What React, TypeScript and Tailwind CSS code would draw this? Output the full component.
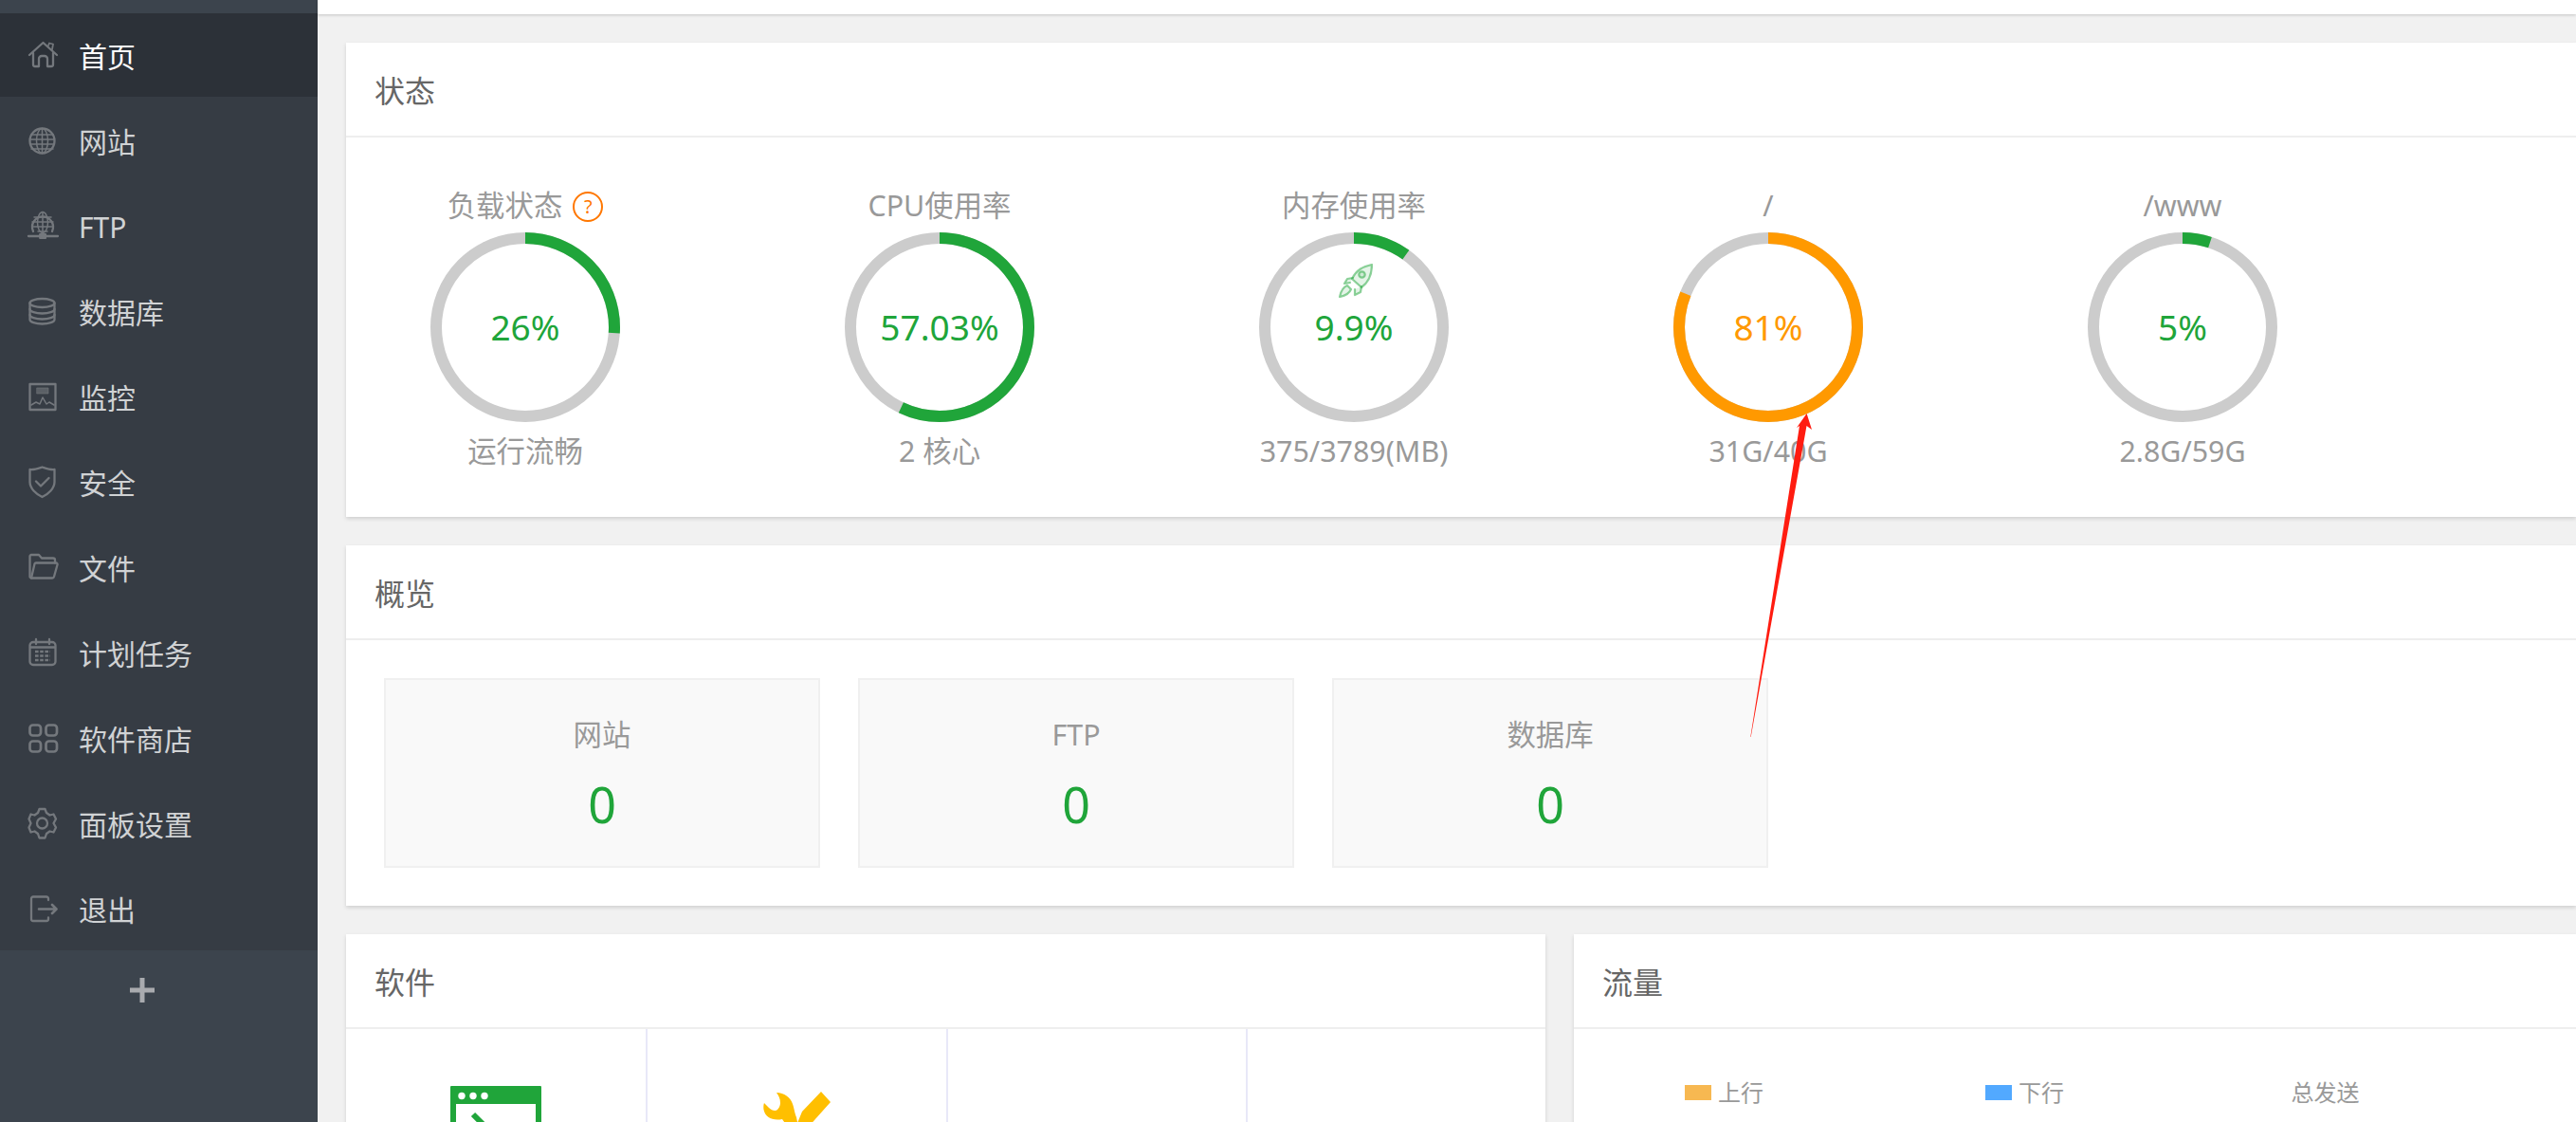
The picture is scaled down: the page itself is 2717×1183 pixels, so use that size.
import React from "react";

const S = ({ children }: { children: React.ReactNode }) => (
  <svg className="overflow-visible blur-[0.4px]" width={32} height={30} viewBox="0 0 32 30" fill="none" stroke="#74787d" strokeWidth={2.3} strokeLinecap="round" strokeLinejoin="round">
    {children}
  </svg>
);

const HomeIcon = () => (
  <S>
    <path d="M1 15 L15.5 2 L30 15" />
    <path d="M21 5 L22 2.5 L26 3.5 L25 9" strokeWidth={1.8} />
    <path d="M5 13 V25 a2 2 0 0 0 2 2 H11 V19 a3 3 0 0 1 3 -3 H17 a3 3 0 0 1 3 3 V27 H24 a2 2 0 0 0 2 -2 V13" />
  </S>
);
const GlobeIcon = () => (
  <S>
    <circle cx="14.5" cy="14.5" r="13" />
    <ellipse cx="14.5" cy="14.5" rx="6" ry="13" strokeWidth={1.5} />
    <path d="M14.5 1.5 V27.5 M3 8 H26 M1.5 13 H27.5 M1.5 18 H27.5 M3 23 H26" strokeWidth={1.5} />
  </S>
);
const FtpIcon = () => (
  <S>
    <path d="M5 20 A11 11 0 1 1 25 20" />
    <ellipse cx="15" cy="10.5" rx="5.5" ry="11" strokeWidth={1.5} />
    <path d="M15 0 V22 M6 5 H24 M4 10 H26 M5 15 H25" strokeWidth={1.5} />
    <path d="M10 20 H20" strokeWidth={1.5} />
    <path d="M0 25 H31" />
    <rect x="12" y="22.5" width="6.5" height="5" fill="#74787d" strokeWidth={1} />
  </S>
);
const DbIcon = () => (
  <S>
    <ellipse cx="14.5" cy="5.5" rx="13" ry="4.5" />
    <path d="M1.5 5.5 V23 C1.5 25.5 7.5 27.5 14.5 27.5 S27.5 25.5 27.5 23 V5.5" />
    <path d="M1.5 12 C1.5 14.5 7.5 16.5 14.5 16.5 S27.5 14.5 27.5 12" />
    <path d="M1.5 18 C1.5 20.5 7.5 22.5 14.5 22.5 S27.5 20.5 27.5 18" />
  </S>
);
const MonitorIcon = () => (
  <S>
    <rect x="1.5" y="1" width="27" height="27" />
    <rect x="9" y="5" width="12" height="6" fill="#74787d" strokeWidth={1} strokeOpacity={0.6} fillOpacity={0.6} />
    <path d="M3 23 L8 20 L12 22 L15 15 L19 22 L22 20 L27 23" strokeWidth={1.5} />
  </S>
);
const ShieldIcon = () => (
  <S>
    <path d="M1.5 1 C6 1.5 10 0 14.5 -1.5 C19 0 23 1.5 27.5 1 V14 C27.5 21 21 27 14.5 30 C8 27 1.5 21 1.5 14 Z" />
    <path d="M8 13.5 L13 18.5 L21.5 10" />
  </S>
);
const FolderIcon = () => (
  <S>
    <g transform="translate(0 -1.5)">
      <path d="M3 27 a1.5 1.5 0 0 1 -1.5 -1.5 V4 a1.5 1.5 0 0 1 1.5 -1.5 H11 L14 6 H26 a2 2 0 0 1 2 2 V11" />
      <path d="M3 27 L6.5 12 a1.5 1.5 0 0 1 1.5 -1 H29 a1.5 1.5 0 0 1 1.5 2 L27 25.5 a2 2 0 0 1 -2 1.5 Z" />
    </g>
  </S>
);
const CalIcon = () => (
  <S>
    <g transform="translate(0 -1)">
      <rect x="1.5" y="4" width="27" height="24" rx="3.5" />
      <path d="M8 1 V6 M22 1 V6 M2 9.5 H28" />
      <path d="M7 14 H23 M7 18.5 H23 M7 23 H23" strokeWidth={2.6} strokeDasharray="3.6 1.6" strokeLinecap="butt" />
    </g>
  </S>
);
const AppsIcon = () => (
  <S>
    <rect x="1.5" y="0.5" width="11.5" height="11" rx="3.2" strokeWidth={2.7} />
    <rect x="18.5" y="0.5" width="11.5" height="11" rx="3.2" strokeWidth={2.7} />
    <rect x="1.5" y="17.5" width="11.5" height="11" rx="3.2" strokeWidth={2.7} />
    <rect x="18.5" y="17.5" width="11.5" height="11" rx="3.2" strokeWidth={2.7} />
  </S>
);
const GearIcon = () => (
  <S>
    <path d="M11.5 -1 H17.5 L19 3 L22.5 5.5 L26.5 4.5 L29 9.5 L26.5 14 L29 18.5 L26.5 23.5 L22.5 22.5 L19 25 L17.5 29.5 H11.5 L10 25 L6.5 22.5 L2.5 23.5 L0.5 18.5 L2.5 14 L0.5 9.5 L2.5 4.5 L6.5 5.5 L10 3 Z" />
    <circle cx="14.5" cy="14" r="5.5" />
  </S>
);
const LogoutIcon = () => (
  <S>
    <path d="M21 5 V3.5 a2 2 0 0 0 -2 -2 H5 a2 2 0 0 0 -2 2 V25 a2 2 0 0 0 2 2 H19 a2 2 0 0 0 2 -2 V23.5" />
    <path d="M11 14.5 H29 M25 10 L29.5 14.5 L25 19" strokeWidth={2.6} />
  </S>
);

const nav: { label: string; icon: React.ReactNode }[] = [
  { label: "网站", icon: <GlobeIcon /> },
  { label: "FTP", icon: <FtpIcon /> },
  { label: "数据库", icon: <DbIcon /> },
  { label: "监控", icon: <MonitorIcon /> },
  { label: "安全", icon: <ShieldIcon /> },
  { label: "文件", icon: <FolderIcon /> },
  { label: "计划任务", icon: <CalIcon /> },
  { label: "软件商店", icon: <AppsIcon /> },
  { label: "面板设置", icon: <GearIcon /> },
];

const Sidebar = () => (
  <aside className="w-[335px] shrink-0 h-full bg-[#3c444d] flex flex-col">
    <div className="h-[14px] shrink-0" />
    <nav className="bg-[#363c44] flex flex-col">
      <a className="h-[88px] mb-[2px] pt-[2px] flex items-center pl-[30px] text-[30px] bg-[#2c3138] text-white">
        <span className="w-[53px] flex mt-[-3px]">
          <HomeIcon />
        </span>
        <span>首页</span>
      </a>
      {nav.map((n) => (
        <a key={n.label} className="h-[90px] flex items-center pl-[30px] text-[30px] text-[#d0d2d4]">
          <span className="w-[53px] flex">{n.icon}</span>
          <span>{n.label}</span>
        </a>
      ))}
      <a className="h-[88px] pt-[2px] flex items-center pl-[30px] text-[30px] text-[#d0d2d4]">
        <span className="w-[53px] flex">
          <LogoutIcon />
        </span>
        <span>退出</span>
      </a>
    </nav>
    <div className="pl-[137px] pt-[29px]">
      <svg width="26" height="26" viewBox="0 0 26 26" fill="#a9abaf">
        <rect x="0" y="10.5" width="26" height="5" />
        <rect x="10.5" y="0" width="5" height="26" />
      </svg>
    </div>
  </aside>
);

const Ring = ({
  title,
  help,
  pct,
  text,
  sub,
  color = "#20a53a",
  rocket,
}: {
  title: string;
  help?: boolean;
  pct: number;
  text: string;
  sub: string;
  color?: string;
  rocket?: boolean;
}) => {
  const r = 94;
  const c = 2 * Math.PI * r;
  return (
    <div className="w-[378px] flex flex-col items-center">
      <div className="h-[34px] leading-[34px] mt-[1px] text-[30.4px] text-[#999] flex items-center gap-[11px]">
        <span>{title}</span>
        {help && (
          <span className="w-[32px] h-[32px] rounded-full border-2 border-[#f70] text-[#f70] text-[20px] flex items-center justify-center mt-[1px]">
            ?
          </span>
        )}
      </div>
      <div className="relative w-[200px] h-[200px] mt-[11px] flex items-center justify-center">
        <svg className="absolute inset-0" width="200" height="200" viewBox="0 0 200 200">
          <circle cx="100" cy="100" r={r} fill="none" stroke="#ccc" strokeWidth="12" />
          <circle
            cx="100"
            cy="100"
            r={r}
            fill="none"
            stroke={color}
            strokeWidth="12"
            strokeDasharray={`${(pct / 100) * c} ${c}`}
            transform="rotate(-90 100 100)"
          />
        </svg>
        {rocket && (
          <svg className="absolute left-[84px] top-[33px] blur-[0.4px]" width="36" height="36" viewBox="0 0 36 36" fill="#20a53a" fillOpacity={0.12} stroke="#20a53a" strokeOpacity={0.5} strokeWidth="2.2" strokeLinejoin="round" strokeLinecap="round">
            <path d="M35 1 C35 12 31 20 24 25 L14 16 C19 6 26 3 35 1 Z" />
            <circle cx="24.5" cy="11.5" r="3.2" />
            <path d="M15 15 L9 16 L6 21 L12 20" />
            <path d="M24 24 L23 30 L17 33 L17 27" />
            <path d="M9 23 C4 25 2 30 1 35 C6 34 11 32 13 27 Z" />
          </svg>
        )}
        <span className="text-[37px] leading-none relative mt-[-2px]" style={{ color }}>
          {text}
        </span>
      </div>
      <div className="h-[34px] leading-[34px] text-[30.4px] text-[#999] mt-[14px]">{sub}</div>
    </div>
  );
};

const CardHeader = ({ title }: { title: string }) => (
  <div className="h-[100px] border-b-2 border-[#eee] pl-[30px] pt-[4px] flex items-center text-[32px] text-[#666]">{title}</div>
);

const Block = ({ label }: { label: string }) => (
  <div className="w-[460px] h-[200px] bg-[#f9f9f9] border-2 border-[#f0f0f0] flex flex-col items-center">
    <div className="h-[40px] leading-[40px] mt-[38px] text-[30.4px] text-[#999]">{label}</div>
    <div className="h-[60px] leading-[60px] mt-[23px] text-[52px] text-[#20a53a]">0</div>
  </div>
);

const cardClass = "bg-white shadow-[0_2px_4px_rgba(0,0,0,0.14)]";

export default function App() {
  return (
    <div className="relative w-[2717px] h-[1183px] overflow-hidden flex bg-[#f1f1f1] font-['Noto_Sans','Noto_Sans_CJK_SC',sans-serif]">
      <Sidebar />
      <main className="flex-1 min-w-0 flex flex-col">
        <div className="h-[15px] shrink-0 bg-white shadow-[0_1px_3px_rgba(0,0,0,0.18)]" />
        <div className="pl-[30px] pt-[30px] flex flex-col gap-[30px]">
          <section className={cardClass}>
            <CardHeader title="状态" />
            <div className="flex gap-[59px] pt-[54px] pb-[52px]">
              <Ring title="负载状态" help pct={26} text="26%" sub="运行流畅" />
              <Ring title="CPU使用率" pct={57.03} text="57.03%" sub="2 核心" />
              <Ring title="内存使用率" pct={9.9} text="9.9%" sub="375/3789(MB)" rocket />
              <Ring title="/" pct={81} text="81%" sub="31G/40G" color="#ff9900" />
              <Ring title="/www" pct={5} text="5%" sub="2.8G/59G" />
            </div>
          </section>
          <section className={cardClass}>
            <CardHeader title="概览" />
            <div className="flex gap-[40px] p-[40px]">
              <Block label="网站" />
              <Block label="FTP" />
              <Block label="数据库" />
            </div>
          </section>
          <div className="flex gap-[30px]">
            <section className={`${cardClass} w-[1265px] shrink-0`}>
              <CardHeader title="软件" />
              <div className="grid grid-cols-[318px_317px_316px_1fr] h-[300px]">
                <div className="border-r-2 border-[#e8e8f8] flex justify-center pt-[60px]">
                  <svg className="blur-[0.3px]" width="96" height="96" viewBox="0 0 96 96">
                    <rect width="96" height="96" rx="1" fill="#20a53a" />
                    <rect x="6" y="19" width="84" height="70" fill="#fff" />
                    <circle cx="12" cy="10.5" r="3.7" fill="#fff" />
                    <circle cx="24" cy="10.5" r="3.7" fill="#fff" />
                    <circle cx="36" cy="10.5" r="3.7" fill="#fff" />
                    <path d="M24 30 L44 50 L24 70" fill="none" stroke="#20a53a" strokeWidth="6" />
                  </svg>
                </div>
                <div className="border-r-2 border-[#e8e8f8] flex justify-center pt-[65px]">
                  <svg className="blur-[0.3px]" width="72" height="72" viewBox="0 0 72 72" fill="#ffbf00">
                    <path d="M14 2 C22 2 29 7 31 14 C33 20 33 23 35 28 L36 33 L30 44 L20 30 C10 32 2 28 0.5 20 C0 17 0.5 14 1 13 L6 18 C9 21 13 22 15 20 C18 17 18 13 18 13 C18 8 16 5 14 2 Z" />
                    <path d="M61 1 L71 12 L46 40 L31 45 L36.5 33 L41 22 Z" />
                  </svg>
                </div>
                <div className="border-r-2 border-[#e8e8f8]" />
                <div />
              </div>
            </section>
            <section className={`${cardClass} flex-1`}>
              <CardHeader title="流量" />
              <div className="flex pt-[50px] text-[24px] text-[#999]">
                <div className="w-[317px] flex items-center justify-center leading-[34px]">
                  <span className="w-[28px] h-[16px] bg-[#f7b851] mr-[7px]" />
                  上行
                </div>
                <div className="w-[317px] flex items-center justify-center leading-[34px]">
                  <span className="w-[28px] h-[16px] bg-[#52a9ff] mr-[7px]" />
                  下行
                </div>
                <div className="w-[317px] text-center leading-[34px]">总发送</div>
              </div>
            </section>
          </div>
        </div>
      </main>
      <svg className="absolute left-[1840px] top-[430px] pointer-events-none" width="80" height="350" viewBox="1840 430 80 350">
        <polygon points="1905.6,436 1911,453 1905.5,449 1846.7,777 1846.3,777 1898,449 1895,451" fill="#ff1c10" />
      </svg>
    </div>
  );
}
